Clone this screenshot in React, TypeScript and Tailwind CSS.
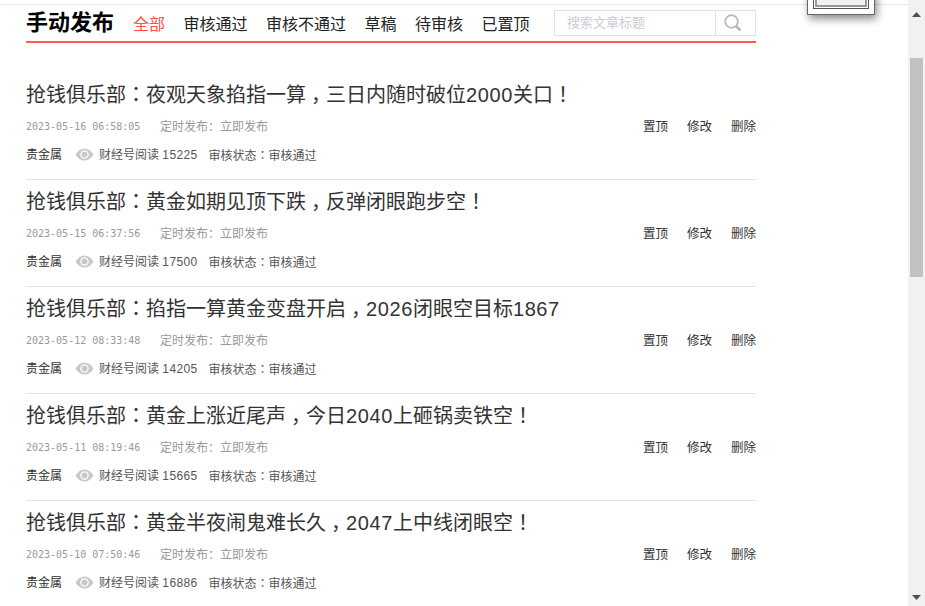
import React from 'react';

const cjk = "font-['Liberation_Sans','Noto_Sans_CJK_SC',sans-serif]";

const posts = [
  { title: '抢钱俱乐部：夜观天象掐指一算，三日内随时破位2000关口！', time: '2023-05-16 06:58:05', reads: 15225 },
  { title: '抢钱俱乐部：黄金如期见顶下跌，反弹闭眼跑步空！', time: '2023-05-15 06:37:56', reads: 17500 },
  { title: '抢钱俱乐部：掐指一算黄金变盘开启，2026闭眼空目标1867', time: '2023-05-12 08:33:48', reads: 14205 },
  { title: '抢钱俱乐部：黄金上涨近尾声，今日2040上砸锅卖铁空！', time: '2023-05-11 08:19:46', reads: 15665 },
  { title: '抢钱俱乐部：黄金半夜闹鬼难长久，2047上中线闭眼空！', time: '2023-05-10 07:50:46', reads: 16886 },
];

const tabs = ['审核通过', '审核不通过', '草稿', '待审核', '已置顶'];

// centred full-width punctuation comes from the TC face, digits run a bit wider
function Mixed({ text }: { text: string }) {
  return (
    <>
      {text.split(/([：，！]|\d+)/).filter(Boolean).map((part, i) => {
        if (part === '，') {
          return <span key={i} className="ml-[0.25em] tracking-[-0.25em]">{part}</span>;
        }
        if (part === '：' || part === '！') {
          return <span key={i} className="font-['Noto_Sans_CJK_TC',sans-serif]">{part}</span>;
        }
        if (/^\d+$/.test(part)) {
          return <span key={i} className="tracking-[0.03em]">{part}</span>;
        }
        return <span key={i}>{part}</span>;
      })}
    </>
  );
}

function EyeIcon() {
  return (
    <svg width="19" height="13" viewBox="0 0 19 13" className="shrink-0 -mt-[2px]">
      <path d="M0.5 6.500C3 2.500 6 0.500 9.500 0.500S16 2.500 18.500 6.500C16 10.500 13 12.500 9.500 12.500S3 10.500 0.500 6.500Z" fill="#c8c8c8" />
      <circle cx="9.500" cy="6.500" r="4.300" fill="#fff" />
      <circle cx="9.500" cy="6.500" r="3" fill="#c8c8c8" />
    </svg>
  );
}

function SearchIcon() {
  return (
    <svg width="18" height="18" viewBox="0 0 18 18" fill="none" stroke="#b9b9b9">
      <circle cx="7.500" cy="7.500" r="6.300" strokeWidth="1.800" />
      <path d="M12 12L16.500 16.500" strokeWidth="2.600" />
    </svg>
  );
}

function PostRow({ post, last }: { post: (typeof posts)[number]; last: boolean }) {
  return (
    <div className={last ? 'h-[107px]' : 'h-[107px] border-b border-[#e4e4e4]'}>
      <h3 className="pt-[6px] h-[37px] text-[20px] leading-[29px] font-normal text-[#333] whitespace-nowrap">
        <Mixed text={post.title} />
      </h3>
      <div className="flex items-center h-[20px] mt-[7px] text-[12px] leading-[20px]">
        <span className="font-['DejaVu_Sans_Mono',monospace] text-[10px] text-[#999] w-[134px]">{post.time}</span>
        <span className="text-[#999]">定时发布：立即发布</span>
        <div className="ml-auto flex gap-[19px] text-[12.500px] text-[#333]">
          <span>置顶</span>
          <span>修改</span>
          <span>删除</span>
        </div>
      </div>
      <div className="flex items-center h-[20px] mt-[8px] text-[12px] leading-[20px] text-[#555]">
        <span className="text-[#333] w-[49px]">贵金属</span>
        <EyeIcon />
        <span className="ml-[5px]">
          财经号阅读 <Mixed text={String(post.reads)} />
        </span>
        <span className="ml-[11px]">
          <Mixed text="审核状态：审核通过" />
        </span>
      </div>
    </div>
  );
}

export default function App() {
  return (
    <div className={`flex h-[606px] w-[925px] overflow-hidden bg-white relative ${cjk}`}>
      <div className="w-[908px] h-full overflow-hidden">
        <div className="h-[5px] border-b border-[#e8e8e8]" />
        <div className="ml-[26px] w-[730px]">
          <div className="flex items-center h-[39px] border-b-[2px] border-[#ff5a4d] mb-[29px] relative -top-[1px]">
            <h1 className="text-[22px] font-bold leading-[36px] text-black w-[107px]">手动发布</h1>
            <div className="flex gap-[18.500px] text-[16px] text-[#222] mt-[4px]">
              <a className="text-[#ff4d40]">全部</a>
              {tabs.map((t) => (
                <a key={t}>{t}</a>
              ))}
            </div>
            <div className="ml-auto flex items-center w-[202px] h-[26px] border border-[#e2e2e2] mt-[1px]">
              <span className="text-[13px] text-[#ccccd6] pl-[12px] w-[160px]">搜索文章标题</span>
              <div className="flex items-center justify-center flex-1 h-[24px] border-l border-[#e2e2e2] pr-[5px]">
                <SearchIcon />
              </div>
            </div>
          </div>
          {posts.map((p, i) => (
            <PostRow key={p.time} post={p} last={i === posts.length - 1} />
          ))}
        </div>
      </div>

      {/* scrollbar */}
      <div className="w-[17px] h-full bg-[#f1f1f1] flex flex-col items-center relative">
        <svg width="9" height="5" viewBox="0 0 9 5" className="mt-[12px]"><path d="M4.500 0L9 5H0Z" fill="#505050" /></svg>
        <div className="w-[13px] h-[219px] bg-[#c1c1c1] mt-[41px]" />
        <svg width="9" height="5" viewBox="0 0 9 5" className="mt-auto mb-[6px]"><path d="M0 0H9L4.500 5Z" fill="#505050" /></svg>
      </div>

      {/* floating window */}
      <div className="absolute left-[807px] top-[-10px] w-[68px] h-[25px] bg-white border border-[#666] p-[5px] shadow-[2px_4px_8px_rgba(0,0,0,0.45)]">
        <div className="w-full h-full border border-[#555] p-[1px]">
          <div className="w-full h-full border-2 border-[#999] bg-[#f0f0f0]" />
        </div>
      </div>
    </div>
  );
}
